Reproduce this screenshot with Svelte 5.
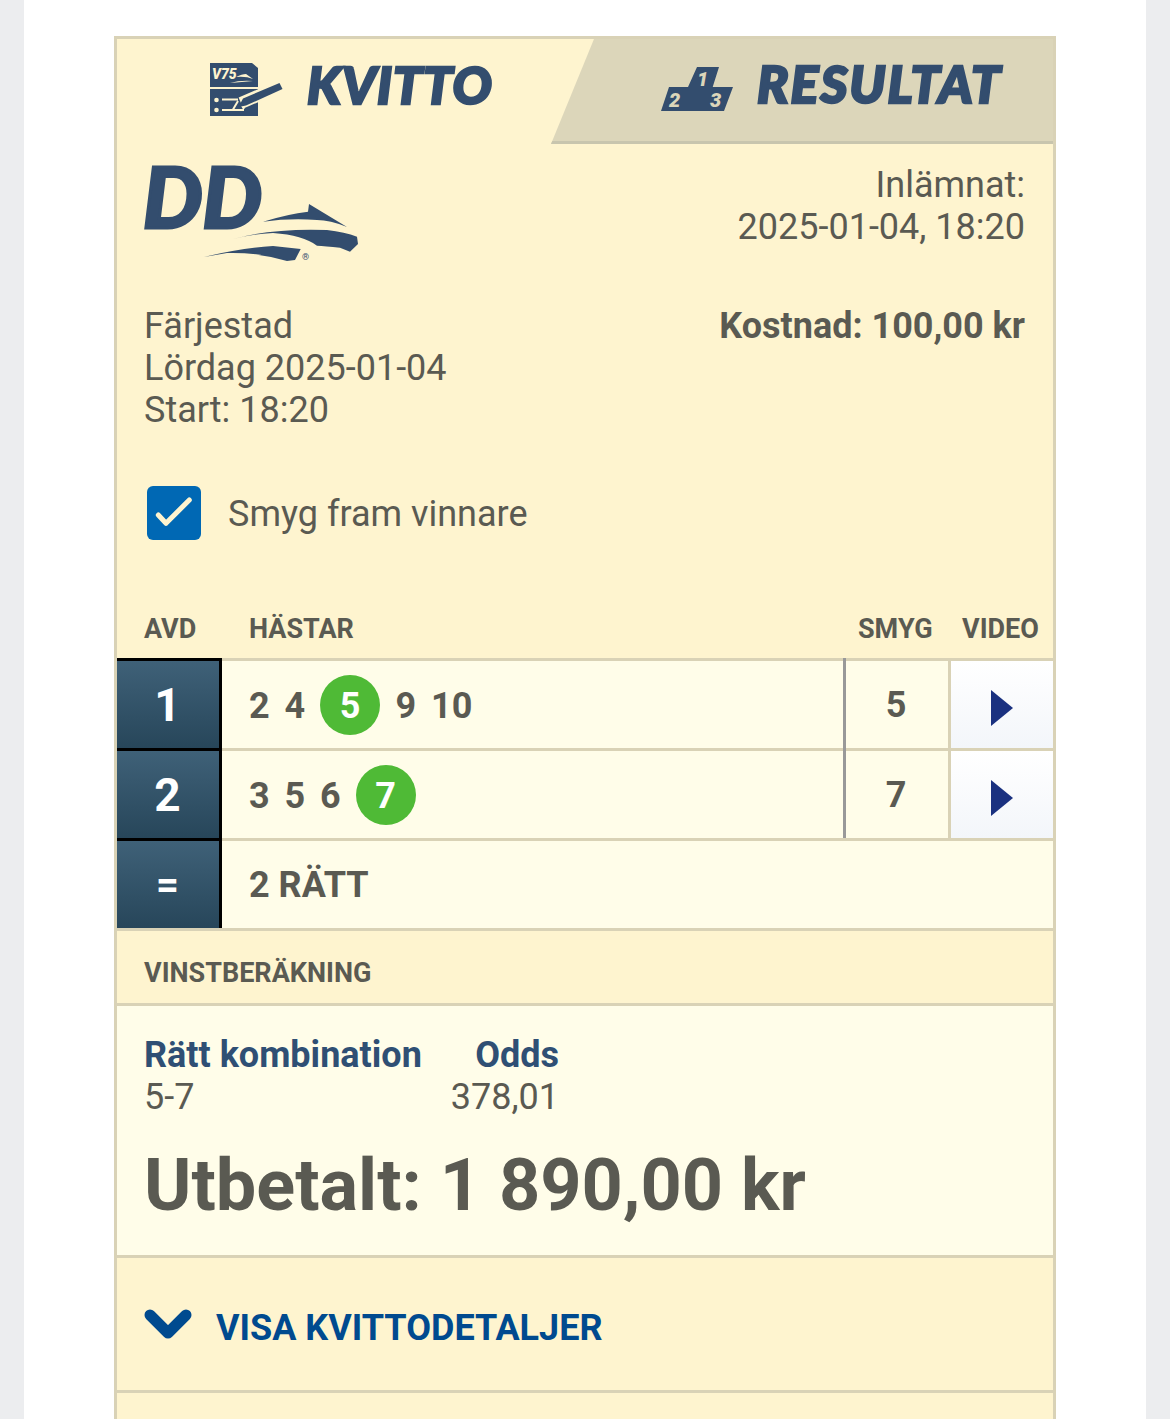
<script>
    const rows = [
        { avd: '1', horses: ['2', '4', '5', '9', '10'], winner: '5' },
        { avd: '2', horses: ['3', '5', '6', '7'], winner: '7' }
    ];
</script>

<div class="page">
    <div class="card">
        <div class="tabs">
            <div class="tab tab-kvitto">
                <svg class="icon-kvitto" width="74" height="54" viewBox="210 63 74 54">
                    <path d="M210 63h42l6 5v19h-48z" fill="#334d6e"/>
                    <text x="212" y="79" class="icon-v75">V75</text>
                    <path d="M236 77Q242 74 246 74L253 79Q246 76 236 77zM230 83Q240 80 253 81Q242 82 230 83z" fill="#fef4cf"/>
                    <path d="M210 89h48v27h-48z" fill="#334d6e"/>
                    <path d="M283 85L241 103" stroke="#fef4cf" stroke-width="12" fill="none"/>
                    <path d="M222 99.500h16M238 101l-5 8.500M222 110h22M241 104l3 5" fill="none" stroke="#fef4cf" stroke-width="2"/>
                    <circle cx="216.500" cy="100" r="2.300" fill="#fef4cf"/>
                    <circle cx="216.500" cy="110" r="2.300" fill="#fef4cf"/>
                    <path d="M279.500 83L282.500 89L246 105.500L238.500 107L243 98.500z" fill="#334d6e"/>
                </svg>
                <span class="tab-label label-kvitto">KVITTO</span>
            </div>
            <div class="tab tab-resultat">
                <svg class="icon-podium" width="72" height="44" viewBox="661 67 72 44">
                    <path d="M697 67h22l-6.300 20h20.300l-9 24h-63l8-24h19z" fill="#334d6e"/>
                    <text x="697" y="86" class="icon-num">1</text>
                    <text x="669" y="107" class="icon-num">2</text>
                    <text x="710" y="107" class="icon-num">3</text>
                </svg>
                <span class="tab-label label-resultat">RESULTAT</span>
            </div>
        </div>

        <div class="info">
            <div class="info-top">
                <div class="logo">
                    <span class="logo-text">DD</span>
                    <svg class="logo-horse" width="170" height="70" viewBox="200 200 170 70">
                        <path d="M263 221.700Q288 214 308 211.700L309 204L347 227Q330 220 317 220Q290 218 263 221.700z" fill="#334d6e"/>
                        <path d="M233 239Q273 228 327 230Q345 232 357 236.700L358 244L350 251.700L340 247.700Q325 246 317 245.700Q303 235 273 233Q250 234 233 239z" fill="#334d6e"/>
                        <path d="M204 257Q240 248 273 246L300.700 249L295 260L287 261Q257 252 227 253z" fill="#334d6e"/>
                        <text x="302" y="260" class="logo-reg">®</text>
                    </svg>
                </div>
                <div class="submitted">Inlämnat:<br>2025-01-04, 18:20</div>
            </div>
            <div class="info-bottom">
                <div>Färjestad<br>Lördag 2025-01-04<br>Start: 18:20</div>
                <div class="cost">Kostnad: 100,00 kr</div>
            </div>
            <label class="sneak">
                <span class="checkbox">
                    <svg width="54" height="54" viewBox="0 0 54 54">
                        <path d="M11.300 29L19 37.300L42.300 14" fill="none" stroke="#fef4cf" stroke-width="5" stroke-linecap="round" stroke-linejoin="round"/>
                    </svg>
                </span>
                <span class="sneak-text">Smyg fram vinnare</span>
            </label>
        </div>

        <div class="table-head">
            <div class="col-avd">AVD</div>
            <div class="col-horses">HÄSTAR</div>
            <div class="col-smyg">SMYG</div>
            <div class="col-video">VIDEO</div>
        </div>

        {#each rows as row}
            <div class="row">
                <div class="avd">{row.avd}</div>
                <div class="horses">
                    {#each row.horses as horse}
                        <span class="horse" class:winner={horse == row.winner}>{horse}</span>
                    {/each}
                </div>
                <div class="smyg">{row.winner}</div>
                <div class="video"><span class="play"></span></div>
            </div>
        {/each}
        <div class="row">
            <div class="avd avd-sum">=</div>
            <div class="horses">2 RÄTT</div>
        </div>

        <div class="band">VINSTBERÄKNING</div>

        <div class="payout">
            <div class="combo">
                <div class="combo-head">Rätt kombination</div>
                <div class="combo-head combo-odds">Odds</div>
                <div>5-7</div>
                <div class="combo-value">378,01</div>
            </div>
            <div class="paid">Utbetalt: 1 890,00 kr</div>
        </div>

        <div class="details">
            <svg width="48" height="32" viewBox="0 0 48 32">
                <path d="M6 7l18 18L42 7" fill="none" stroke="#004a8f" stroke-width="11" stroke-linecap="round" stroke-linejoin="round"/>
            </svg>
            VISA KVITTODETALJER
        </div>
        <div class="tail"></div>
    </div>
</div>

<style>
    :global(body) {
        background: #ecedef;
    }

    .page {
        width: 1122px;
        height: 1419px;
        margin: 0 24px;
        padding-top: 36px;
        box-sizing: border-box;
        background: #fff;
        overflow: hidden;
        font-family: Roboto, sans-serif;
        font-size: 36px;
        line-height: 42px;
        color: #5a5a52;
    }

    .card {
        width: 942px;
        margin-left: 90px;
        box-sizing: border-box;
        border: 3px solid #d9d2b6;
        border-bottom: 0;
        background: #fef4cf;
    }

    .tabs {
        display: flex;
        height: 105px;
    }

    .tab {
        display: flex;
        align-items: center;
        box-sizing: border-box;
        padding-bottom: 6px;
    }

    .tab-kvitto {
        width: 434px;
        padding-left: 93px;
    }

    .tab-resultat {
        flex: 1;
        padding-left: 110px;
        background: #dcd6ba;
        border-bottom: 3px solid #c8c5ae;
        clip-path: polygon(43px 0, 100% 0, 100% 100%, 0 100%);
    }

    .tab-label {
        font-family: Lato, sans-serif;
        font-weight: 900;
        font-style: italic;
        font-size: 52px;
        line-height: 56px;
        color: #334d6e;
        -webkit-text-stroke: 2.5px #334d6e;
        margin-left: 23px;
        margin-bottom: 9px;
    }

    .label-kvitto {
        letter-spacing: 1px;
    }

    .label-resultat {
        letter-spacing: 2px;
        margin-left: 24px;
    }

    .icon-kvitto {
        margin-top: 3px;
    }

    .icon-podium {
        margin-top: 3px;
    }

    .icon-v75 {
        font: italic 900 14px Roboto, sans-serif;
        fill: #fef4cf;
    }

    .icon-num {
        font: italic 900 20px Roboto, sans-serif;
        fill: #dcd6ba;
    }

    .info {
        padding: 20px 28px 0 27px;
    }

    .info-top {
        display: flex;
        justify-content: space-between;
    }

    .logo {
        position: relative;
        width: 220px;
        height: 141px;
    }

    .logo-text {
        display: block;
        margin: -10px 0 0 -1px;
        font-family: Lato, sans-serif;
        font-weight: 900;
        font-style: italic;
        font-size: 84px;
        line-height: 84px;
        color: #334d6e;
        -webkit-text-stroke: 3px #334d6e;
    }

    .logo-horse {
        position: absolute;
        left: 56px;
        top: 36px;
    }

    .logo-reg {
        font: 9px Roboto, sans-serif;
        fill: #334d6e;
    }

    .submitted {
        text-align: right;
    }

    .info-bottom {
        display: flex;
        justify-content: space-between;
    }

    .cost {
        font-weight: 700;
    }

    .sneak {
        display: flex;
        align-items: center;
        gap: 27px;
        margin: 55px 0 0 3px;
    }

    .sneak-text {
        margin-top: 2px;
    }

    .checkbox {
        display: block;
        width: 54px;
        height: 54px;
        border-radius: 6px;
        background: #0068b4;
    }

    .checkbox svg {
        display: block;
    }

    .table-head {
        display: flex;
        align-items: center;
        height: 58px;
        margin-top: 60px;
        font-size: 27px;
        font-weight: 700;
    }

    .col-avd {
        width: 132px;
        padding-left: 27px;
        box-sizing: border-box;
    }

    .col-horses {
        flex: 1;
    }

    .col-smyg {
        width: 104px;
    }

    .col-video {
        width: 91px;
    }

    .row {
        display: flex;
        height: 90px;
        box-sizing: border-box;
        border-top: 3px solid #d9d2b6;
        background: #fffde9;
    }

    .avd {
        position: relative;
        display: flex;
        align-items: center;
        justify-content: center;
        width: 105px;
        margin-top: -3px;
        box-sizing: border-box;
        border-top: 3px solid #000;
        border-right: 3px solid #000;
        background: linear-gradient(#3f6178, #27465a);
        color: #fff;
        font-size: 46px;
        font-weight: 700;
        padding-right: 1px;
    }

    .avd-sum {
        font-size: 40px;
    }

    .horses {
        flex: 1;
        display: flex;
        align-items: center;
        gap: 15.5px;
        padding-left: 27px;
        font-weight: 700;
    }

    .horse {
        width: 20px;
        padding-top: 2px;
        box-sizing: content-box;
    }

    .winner {
        display: flex;
        align-items: center;
        justify-content: center;
        width: 60px;
        height: 60px;
        box-sizing: border-box;
        border-radius: 50%;
        background: #4fba36;
        color: #fff;
    }

    .smyg {
        display: flex;
        align-items: center;
        justify-content: center;
        width: 105px;
        box-sizing: border-box;
        margin-top: -3px;
        padding-top: 4px;
        padding-right: 2px;
        border-left: 3px solid #999;
        font-weight: 700;
    }

    .video {
        display: flex;
        align-items: center;
        justify-content: center;
        width: 105px;
        box-sizing: border-box;
        border-left: 3px solid #d9d2b6;
        background: linear-gradient(#fff, #f3f6fa);
    }

    .play {
        display: block;
        margin-top: 6px;
        border-left: 22px solid #1a3180;
        border-top: 18px solid transparent;
        border-bottom: 18px solid transparent;
    }

    .band {
        display: flex;
        align-items: center;
        height: 75px;
        box-sizing: border-box;
        border-top: 3px solid #d9d2b6;
        padding: 12px 27px 0;
        font-size: 27px;
        font-weight: 700;
    }

    .payout {
        height: 255px;
        box-sizing: border-box;
        border-top: 3px solid #d9d2b6;
        border-bottom: 3px solid #d9d2b6;
        padding: 28px 27px 0;
        background: #fffde9;
    }

    .combo {
        display: grid;
        grid-template-columns: 277px 138px;
    }

    .combo-head {
        color: #2f4f74;
        font-weight: 700;
        white-space: nowrap;
    }

    .combo-odds {
        text-align: right;
    }

    .combo-value {
        text-align: right;
    }

    .paid {
        margin-top: 26px;
        font-size: 72px;
        line-height: 84px;
        font-weight: 700;
    }

    .details {
        display: flex;
        align-items: center;
        gap: 24px;
        height: 132px;
        padding: 8px 27px 0;
        box-sizing: border-box;
        color: #004a8f;
        font-weight: 700;
    }

    .details svg {
        margin-bottom: 8px;
    }

    .tail {
        height: 40px;
        border-top: 3px solid #d9d2b6;
    }
</style>
